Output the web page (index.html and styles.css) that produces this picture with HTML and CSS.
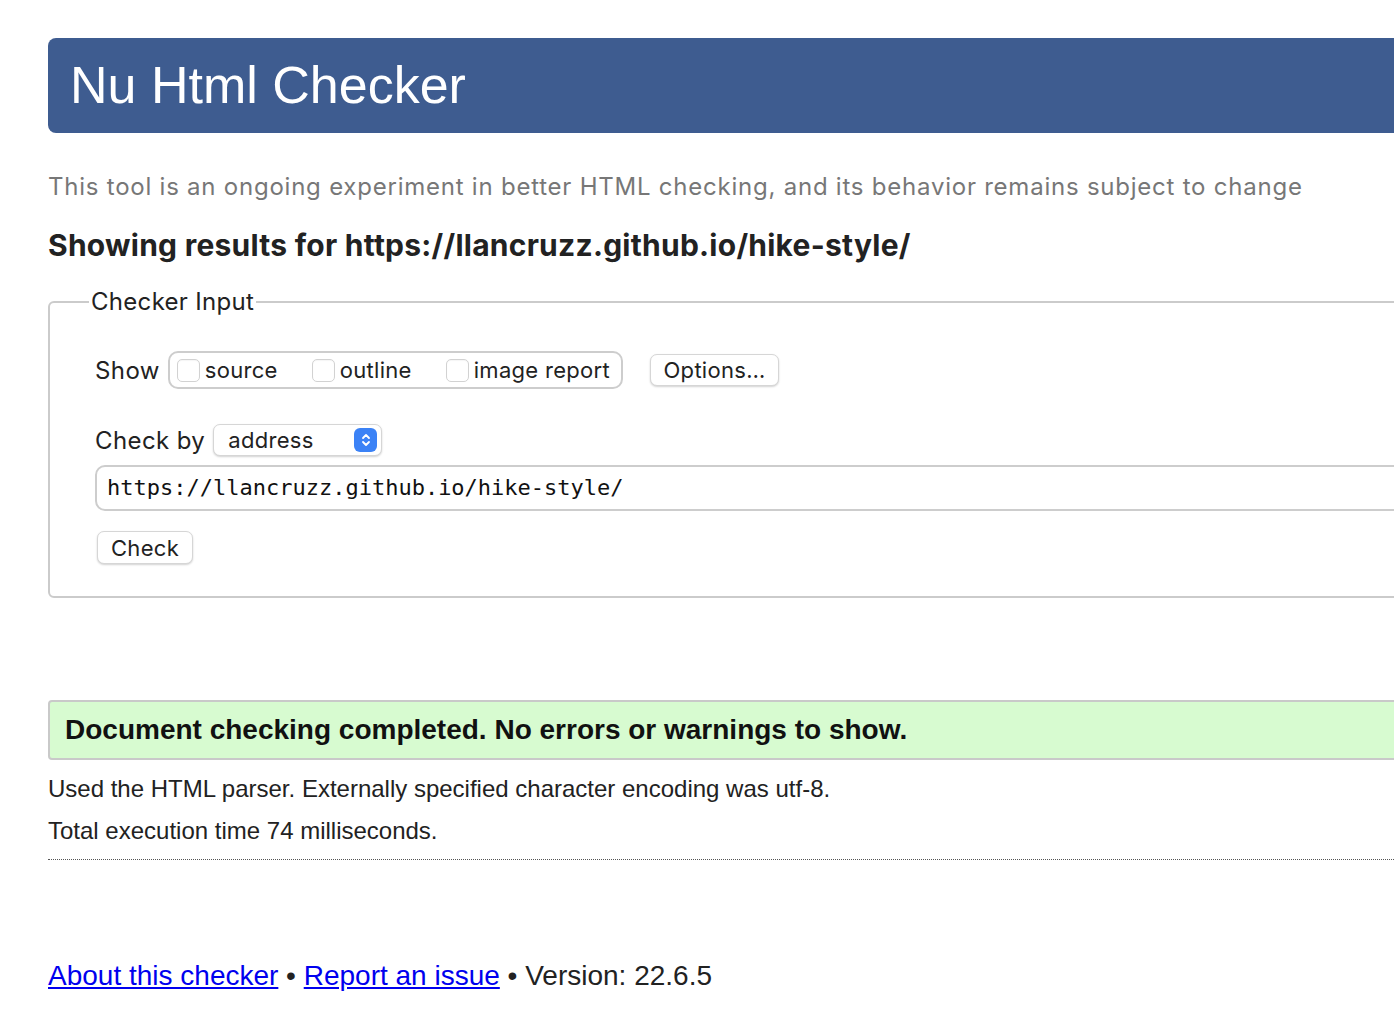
FILE: index.html
```html
<!DOCTYPE html>
<html lang="en">
<head>
<meta charset="utf-8">
<title>Nu Html Checker</title>
<link rel="stylesheet" href="styles.css">
</head>
<body>
<div class="page">
  <h1 class="banner">Nu Html Checker</h1>
  <p class="subtitle">This tool is an ongoing experiment in better HTML checking, and its behavior remains subject to change</p>
  <h2 class="showing">Showing results for https://llancruzz.github.io/hike-style/</h2>

  <form class="form">
    <fieldset class="checker">
      <legend class="legend">Checker Input</legend>
      <div class="row show-row">
        <span class="label">Show</span>
        <span class="group">
          <label class="opt"><input type="checkbox" class="cb"><span>source</span></label>
          <label class="opt"><input type="checkbox" class="cb"><span>outline</span></label>
          <label class="opt"><input type="checkbox" class="cb"><span>image report</span></label>
        </span>
        <button type="button" class="btn options">Options…</button>
      </div>
      <div class="row by-row">
        <span class="label">Check by</span>
        <span class="select">
          <span class="select-text">address</span>
          <span class="stepper">
            <svg width="10" height="16" viewBox="0 0 10 16" aria-hidden="true">
              <path d="M2 6 L5 3 L8 6" fill="none" stroke="#fff" stroke-width="1.8" stroke-linecap="round" stroke-linejoin="round"/>
              <path d="M2 10 L5 13 L8 10" fill="none" stroke="#fff" stroke-width="1.8" stroke-linecap="round" stroke-linejoin="round"/>
            </svg>
          </span>
        </span>
      </div>
      <div class="url">https://llancruzz.github.io/hike-style/</div>
      <button type="button" class="btn check">Check</button>
    </fieldset>
  </form>

  <div class="success">Document checking completed. No errors or warnings to show.</div>
  <p class="info">Used the HTML parser. Externally specified character encoding was utf-8.</p>
  <p class="info">Total execution time 74 milliseconds.</p>
  <hr class="dotted">
  <p class="footer"><a href="#">About this checker</a> • <a href="#">Report an issue</a> • Version: 22.6.5</p>
</div>
</body>
</html>
```
FILE: styles.css
```css
html, body {
  margin: 0;
  padding: 0;
  overflow: hidden;
  background: #fff;
}
body {
  font-family: "Liberation Sans", Arial, sans-serif;
  color: #222;
}
.page {
  margin-left: 48px;
  width: 1500px;
  padding-top: 38px;
}
.banner {
  margin: 0;
  height: 95px;
  line-height: 95px;
  background: #3e5c90;
  color: #fff;
  font-weight: normal;
  font-size: 52px;
  padding-left: 22px;
  border-radius: 8px;
}
.subtitle {
  margin: 39px 0 0;
  font-family: Inter, "Liberation Sans", sans-serif;
  font-size: 24px;
  line-height: 30px;
  color: #777;
  letter-spacing: 0.77px;
}
.showing {
  margin: 25px 0 0;
  font-family: Inter, "Liberation Sans", sans-serif;
  font-size: 30px;
  line-height: 36px;
  font-weight: 700;
  color: #222;
  letter-spacing: 0.25px;
}
.form {
  margin: 24px 0 0;
}
.checker {
  margin: 0;
  border: 2px solid #cbcbcb;
  border-radius: 6px;
  padding: 34px 0 32px 45px;
  font-family: Inter, "Liberation Sans", sans-serif;
}
.legend {
  font-size: 24px;
  line-height: 30px;
  margin-left: -6px;
  padding: 0 2px;
  color: #222;
  letter-spacing: 0.3px;
}
.row {
  display: flex;
  align-items: center;
}
.label {
  font-size: 24px;
  color: #222;
  margin-right: 8px;
  letter-spacing: 0.4px;
}
.group {
  display: inline-flex;
  align-items: center;
  height: 34px;
  border: 2px solid #cdcdcd;
  border-radius: 10px;
  padding: 0 11px 0 7px;
  gap: 34px;
}
.opt {
  display: inline-flex;
  align-items: center;
  gap: 5px;
  font-size: 22px;
  color: #222;
  letter-spacing: 0.3px;
}
.cb {
  appearance: none;
  -webkit-appearance: none;
  margin: 0;
  width: 23px;
  height: 23px;
  border: 1px solid #d2d2d2;
  border-radius: 5px;
  background: #fff;
  box-shadow: inset 0 1px 1px rgba(0,0,0,0.04);
}
.btn {
  font-family: Inter, "Liberation Sans", sans-serif;
  font-size: 22px;
  color: #222;
  background: #fff;
  border: 1px solid #d6d6d6;
  border-radius: 7px;
  box-shadow: 0 1px 2px rgba(0,0,0,0.18);
  padding: 0 10px;
  height: 32px;
  letter-spacing: 0.3px;
}
.options {
  margin-left: 27px;
  width: 129px;
}
.by-row {
  margin-top: 35px;
}
.select {
  display: inline-flex;
  align-items: center;
  justify-content: space-between;
  width: 169px;
  height: 32px;
  box-sizing: border-box;
  border: 1px solid #d6d6d6;
  border-radius: 7px;
  box-shadow: 0 1px 2px rgba(0,0,0,0.18);
  padding: 0 4px 0 14px;
  background: #fff;
}
.select-text {
  font-size: 22px;
  color: #222;
  letter-spacing: 0.3px;
}
.stepper {
  width: 23px;
  height: 24px;
  border-radius: 6px;
  background: #3b82f6;
  display: flex;
  align-items: center;
  justify-content: center;
}
.url {
  margin-top: 9px;
  height: 42px;
  line-height: 42px;
  border: 2px solid #cdcdcd;
  border-radius: 10px;
  padding-left: 10px;
  font-family: "DejaVu Sans Mono", "Liberation Mono", monospace;
  font-size: 22px;
  color: #111;
}
.check {
  margin-top: 20px;
  margin-left: 2px;
  width: 96px;
  height: 33px;
}
.success {
  margin-top: 102px;
  height: 56px;
  line-height: 56px;
  border: 2px solid #c9c9c9;
  border-radius: 4px;
  background: #d7fbd0;
  padding-left: 15px;
  font-size: 28px;
  font-weight: bold;
  color: #111;
  letter-spacing: 0;
}
.info {
  margin: 0;
  font-size: 24px;
  line-height: 30px;
  color: #222;
}
.success + .info {
  margin-top: 14px;
}
.info + .info {
  margin-top: 12px;
}
.dotted {
  margin: 13px 0 0;
  border: 0;
  border-top: 1px dotted #555;
  height: 0;
}
.footer {
  margin: 99px 0 0;
  font-size: 28px;
  line-height: 34px;
  color: #222;
}
.footer a {
  color: #0000ee;
}
```
